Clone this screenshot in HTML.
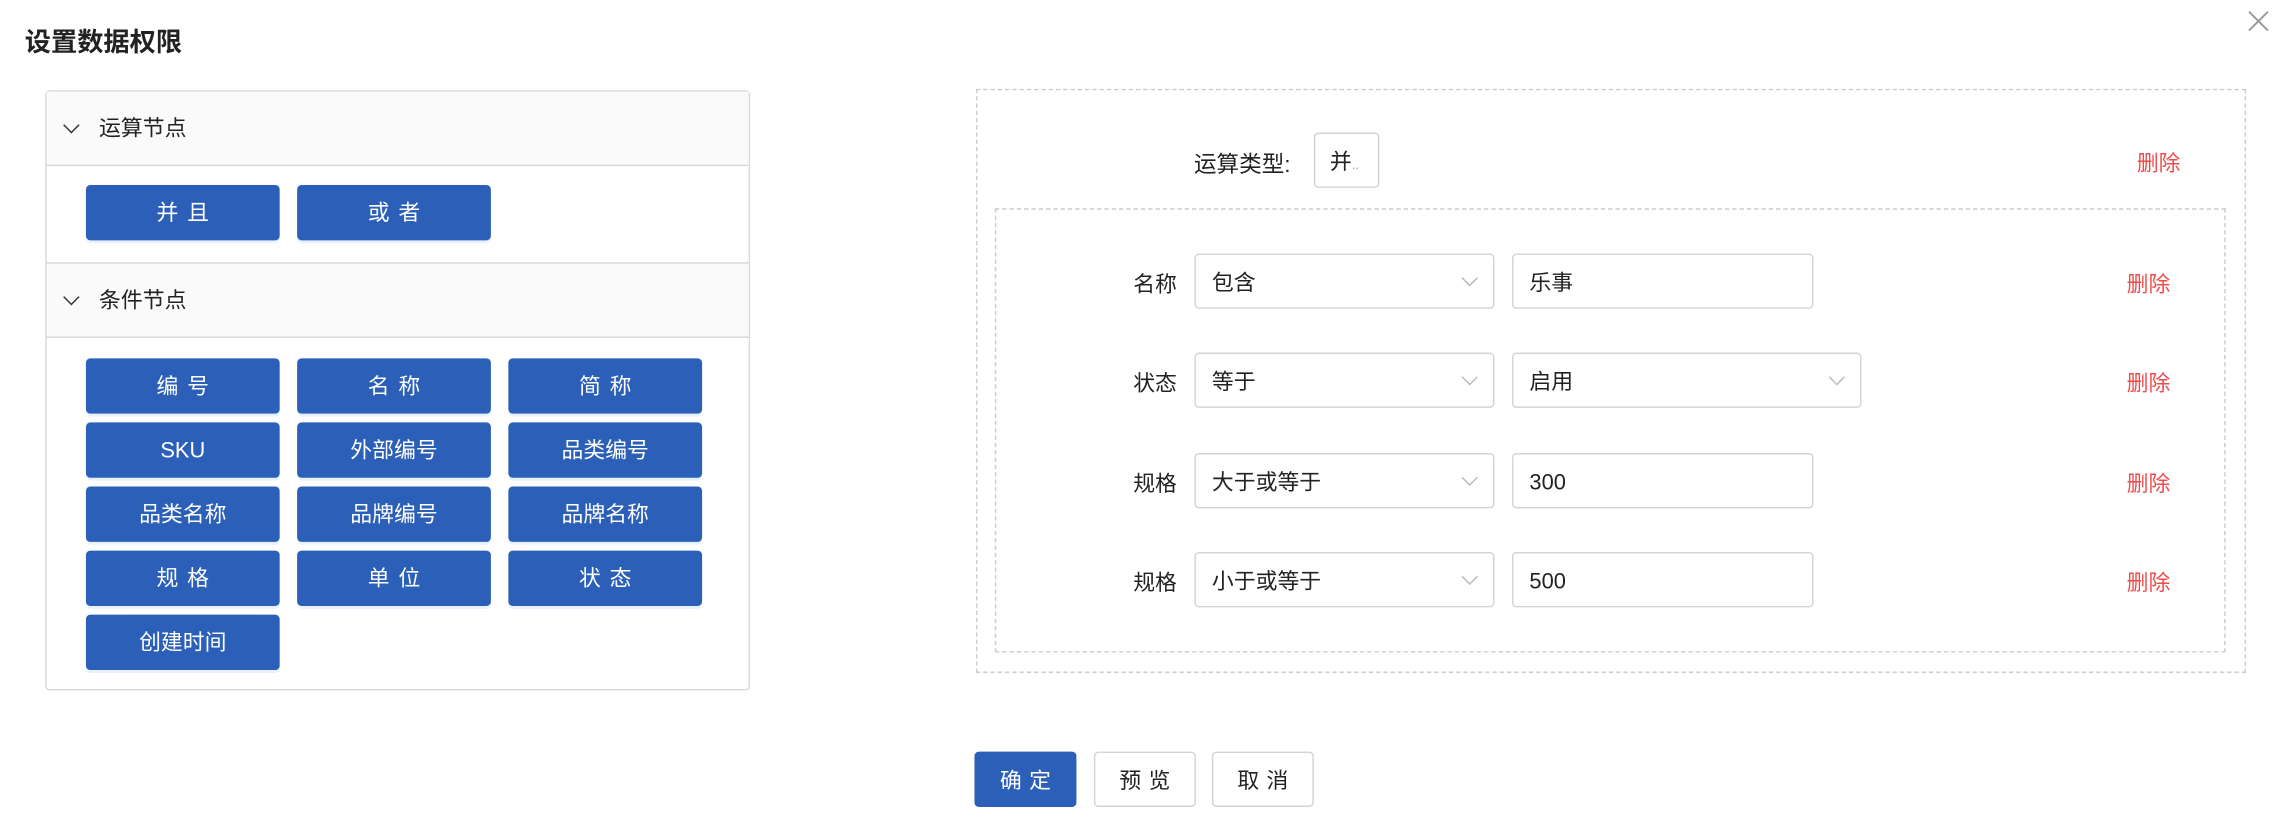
<!DOCTYPE html>
<html><head><meta charset="utf-8"><style>
*{box-sizing:border-box;margin:0;padding:0}
body{width:2284px;height:830px;overflow:hidden;background:#fff;font-family:"Liberation Sans","Noto Sans CJK SC",sans-serif;color:#222}
#s{position:absolute;left:0;top:0;width:1568px;height:570px;transform:scale(1.4566);transform-origin:0 0}
.a{position:absolute}
.t{left:17px;top:15px;font-size:18px;font-weight:bold;color:#222}
.panel{left:31px;top:62px;width:484px;height:412px;border:1px solid #d9d9d9;border-radius:3px}
.hd{position:absolute;left:0;width:482px;height:51px;background:#fafafa;border-bottom:1px solid #d9d9d9;font-size:15px;line-height:52px;padding-left:36px}
.hd i{position:absolute;left:13px;top:19px;width:8px;height:8px;border-right:1.3px solid #333;border-bottom:1.3px solid #333;transform:rotate(45deg)}
.b{position:absolute;width:133px;height:38px;background:#2b5fb8;color:#fff;border-radius:3px;font-size:15px;text-align:center;line-height:40px;box-shadow:0 2px 0 #e8f2ff}
.ls{letter-spacing:6px;text-indent:6px}
.dash{border:1px dashed #ccc}
.lab{font-size:15px;text-align:right}
.sel{position:absolute;height:38px;border:1px solid #d4d4d4;border-radius:3px;font-size:15px;line-height:39px;padding-left:11px;background:#fff}
.sel.ar:after{content:"";position:absolute;right:12px;top:12px;width:7px;height:7px;border-right:1px solid #bbb;border-bottom:1px solid #bbb;transform:rotate(45deg)}
.del{color:#f04b4b;font-size:15px}
.fb{position:absolute;top:516px;height:38px;width:70px;border:1px solid #d4d4d4;border-radius:3px;font-size:15px;text-align:center;line-height:39px;letter-spacing:5px;text-indent:5px}
</style></head><body><div id="s">
<div class="a t">设置数据权限</div>
<svg class="a" style="left:1543px;top:7px" width="15" height="15"><path d="M1 1L14 14M14 1L1 14" stroke="#999" stroke-width="1.3"/></svg>
<div class="a panel">
<div class="hd" style="top:0"><i></i>运算节点</div>
<div class="b ls" style="left:27px;top:64px">并且</div>
<div class="b ls" style="left:172px;top:64px">或者</div>
<div class="hd" style="top:117px;border-top:1px solid #d9d9d9;height:52px"><i></i>条件节点</div>
<div class="b ls" style="left:27px;top:183px">编号</div>
<div class="b ls" style="left:172px;top:183px">名称</div>
<div class="b ls" style="left:317px;top:183px">简称</div>
<div class="b" style="left:27px;top:227px">SKU</div>
<div class="b" style="left:172px;top:227px">外部编号</div>
<div class="b" style="left:317px;top:227px">品类编号</div>
<div class="b" style="left:27px;top:271px">品类名称</div>
<div class="b" style="left:172px;top:271px">品牌编号</div>
<div class="b" style="left:317px;top:271px">品牌名称</div>
<div class="b ls" style="left:27px;top:315px">规格</div>
<div class="b ls" style="left:172px;top:315px">单位</div>
<div class="b ls" style="left:317px;top:315px">状态</div>
<div class="b" style="left:27px;top:359px">创建时间</div>
</div>
<div class="a dash" style="left:670px;top:61px;width:872px;height:401px"></div>
<div class="a lab" style="left:770px;top:101px;width:116px;font-size:15.5px">运算类型:</div>
<div class="sel" style="left:902px;top:91px;width:45px;padding-left:10px">并<span style="font-size:9px;color:#999">..</span></div>
<div class="a del" style="left:1467px;top:101px">删除</div>
<div class="a dash" style="left:683px;top:143px;width:845px;height:305px"></div>

<div class="a lab" style="left:740px;top:184px;width:68px">名称</div>
<div class="sel ar" style="left:820px;top:174px;width:206px">包含</div>
<div class="sel" style="left:1038px;top:174px;width:207px">乐事</div>
<div class="a del" style="left:1460px;top:184px">删除</div>

<div class="a lab" style="left:740px;top:252px;width:68px">状态</div>
<div class="sel ar" style="left:820px;top:242px;width:206px">等于</div>
<div class="sel ar" style="left:1038px;top:242px;width:240px">启用</div>
<div class="a del" style="left:1460px;top:252px">删除</div>

<div class="a lab" style="left:740px;top:321px;width:68px">规格</div>
<div class="sel ar" style="left:820px;top:311px;width:206px">大于或等于</div>
<div class="sel" style="left:1038px;top:311px;width:207px">300</div>
<div class="a del" style="left:1460px;top:321px">删除</div>

<div class="a lab" style="left:740px;top:389px;width:68px">规格</div>
<div class="sel ar" style="left:820px;top:379px;width:206px">小于或等于</div>
<div class="sel" style="left:1038px;top:379px;width:207px">500</div>
<div class="a del" style="left:1460px;top:389px">删除</div>

<div class="fb" style="left:669px;background:#2b5fb8;border-color:#2b5fb8;color:#fff">确定</div>
<div class="fb" style="left:751px">预览</div>
<div class="fb" style="left:832px">取消</div>
</div></body></html>
